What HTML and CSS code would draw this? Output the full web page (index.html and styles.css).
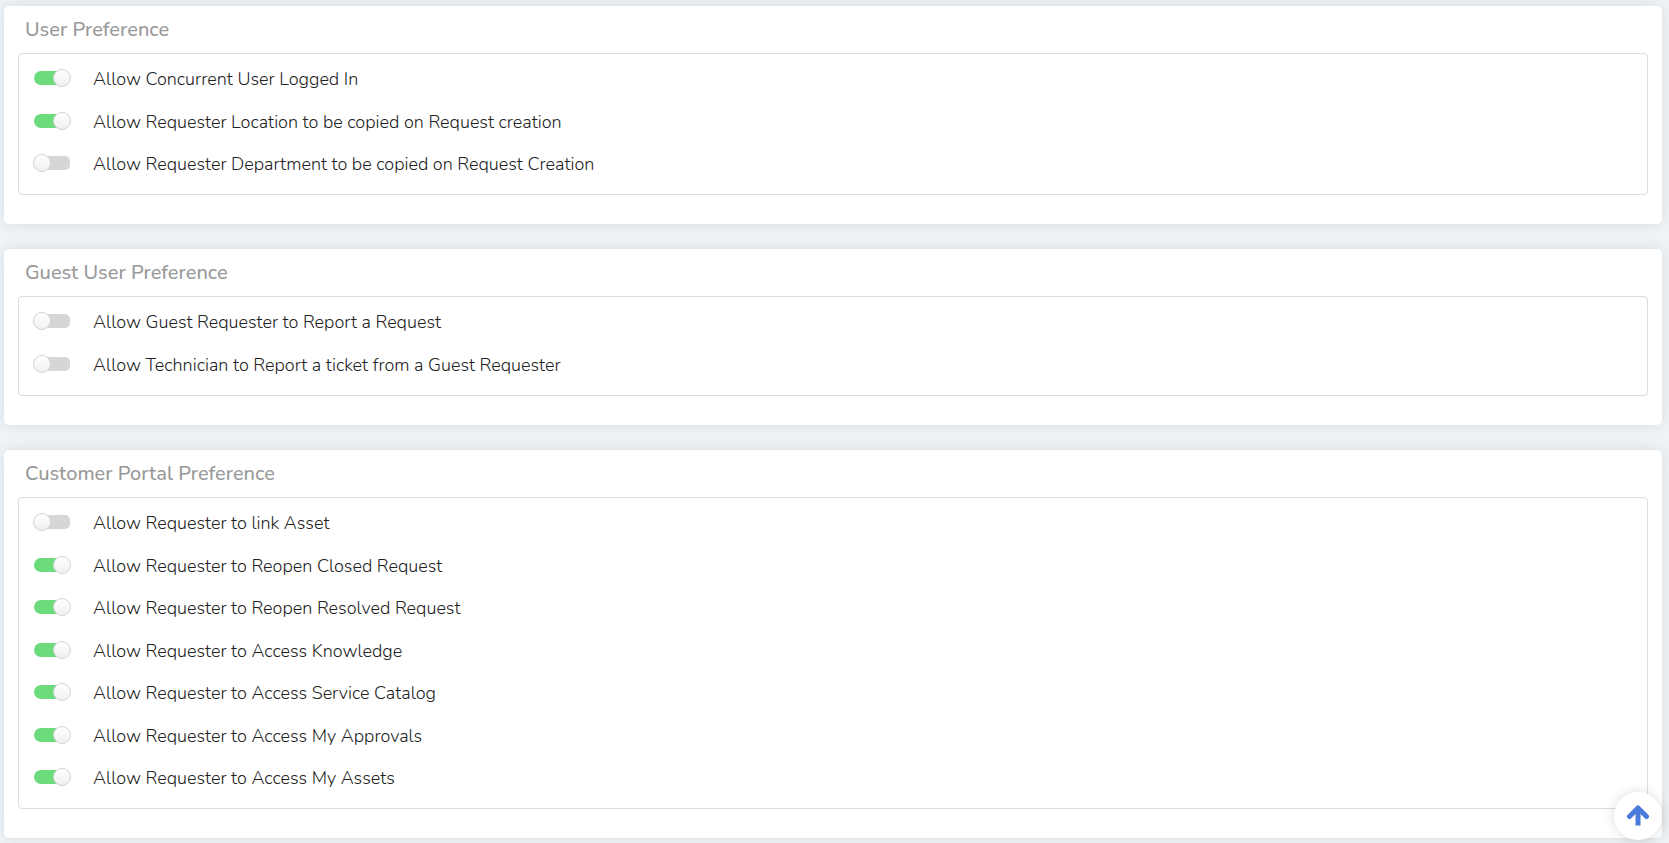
FILE: index.html
```html
<!DOCTYPE html>
<html lang="en">
<head>
    <meta charset="UTF-8">
    <meta name="viewport" content="width=device-width, initial-scale=1.0">
    <title>Preferences</title>
    <link rel="stylesheet" href="styles.css">
</head>
<body>
    <main class="page">
        <section class="card">
            <h2 class="card-title">User Preference</h2>
            <div class="options">
                <label class="option"><input type="checkbox" class="switch" checked><span>Allow Concurrent User Logged In</span></label>
                <label class="option"><input type="checkbox" class="switch" checked><span>Allow Requester Location to be copied on Request creation</span></label>
                <label class="option"><input type="checkbox" class="switch"><span>Allow Requester Department to be copied on Request Creation</span></label>
            </div>
        </section>

        <section class="card">
            <h2 class="card-title">Guest User Preference</h2>
            <div class="options">
                <label class="option"><input type="checkbox" class="switch"><span>Allow Guest Requester to Report a Request</span></label>
                <label class="option"><input type="checkbox" class="switch"><span>Allow Technician to Report a ticket from a Guest Requester</span></label>
            </div>
        </section>

        <section class="card">
            <h2 class="card-title">Customer Portal Preference</h2>
            <div class="options">
                <label class="option"><input type="checkbox" class="switch"><span>Allow Requester to link Asset</span></label>
                <label class="option"><input type="checkbox" class="switch" checked><span>Allow Requester to Reopen Closed Request</span></label>
                <label class="option"><input type="checkbox" class="switch" checked><span>Allow Requester to Reopen Resolved Request</span></label>
                <label class="option"><input type="checkbox" class="switch" checked><span>Allow Requester to Access Knowledge</span></label>
                <label class="option"><input type="checkbox" class="switch" checked><span>Allow Requester to Access Service Catalog</span></label>
                <label class="option"><input type="checkbox" class="switch" checked><span>Allow Requester to Access My Approvals</span></label>
                <label class="option"><input type="checkbox" class="switch" checked><span>Allow Requester to Access My Assets</span></label>
            </div>
        </section>
    </main>

    <button type="button" class="to-top" aria-label="Back to top" onclick="window.scrollTo(0, 0)">
        <svg width="24" height="24" viewBox="0 0 24 24" fill="none" stroke="#4a7bdc" stroke-width="5" stroke-linecap="round" stroke-linejoin="round">
            <path d="M3.500 12.500 12 4 20.500 12.500"/>
            <path d="M12 6V19" stroke-linecap="square"/>
        </svg>
    </button>
</body>
</html>
```
FILE: styles.css
```css
* {
    box-sizing: border-box;
}
body {
    margin: 0;
    background-color: #eff4f7;
    font-family: Nunito, Lato, sans-serif;
    color: #222;
}
.page {
    display: flex;
    flex-direction: column;
    gap: 25px;
    padding: 6px 7px 5px 4px;
}
.card {
    padding: 0 14px 29px;
    background: #fff;
    border-radius: 5px;
    box-shadow: 0 0 16px rgba(60, 80, 80, 0.14);
}
.card-title {
    margin: 0;
    padding-left: 7px;
    font-size: 20px;
    font-weight: 500;
    line-height: 47px;
    color: #999;
}
.options {
    padding: 3px 15px 10px;
    border: 1px solid #dcdcdc;
    border-radius: 4px;
}
.option {
    display: flex;
    align-items: center;
    gap: 23px;
    height: 42px;
    font-size: 18px;
    font-weight: 300;
    cursor: pointer;
}
.option:nth-child(even) {
    height: 43px;
}
.option span {
    padding-top: 2px;
}
.switch {
    appearance: none;
    position: relative;
    flex: none;
    width: 36px;
    height: 14px;
    margin: 0;
    border-radius: 5px;
    background: #d6d6d6;
    cursor: pointer;
}
.switch::before {
    content: "";
    position: absolute;
    top: -2px;
    left: -1px;
    width: 18px;
    height: 18px;
    border: 1px solid #d0d4dd;
    border-radius: 50%;
    background: linear-gradient(#fff, #f0f0f0);
    box-sizing: border-box;
}
.switch:checked {
    border-radius: 7px;
    background: #6bdb7b;
}
.switch:checked::before {
    left: 19px;
}
.to-top {
    position: fixed;
    right: 7px;
    bottom: 3px;
    display: flex;
    align-items: center;
    justify-content: center;
    width: 48px;
    height: 48px;
    padding: 0;
    border: none;
    border-radius: 50%;
    background: #fff;
    box-shadow: 0 0 12px rgba(0, 0, 0, 0.14);
    cursor: pointer;
}
```
